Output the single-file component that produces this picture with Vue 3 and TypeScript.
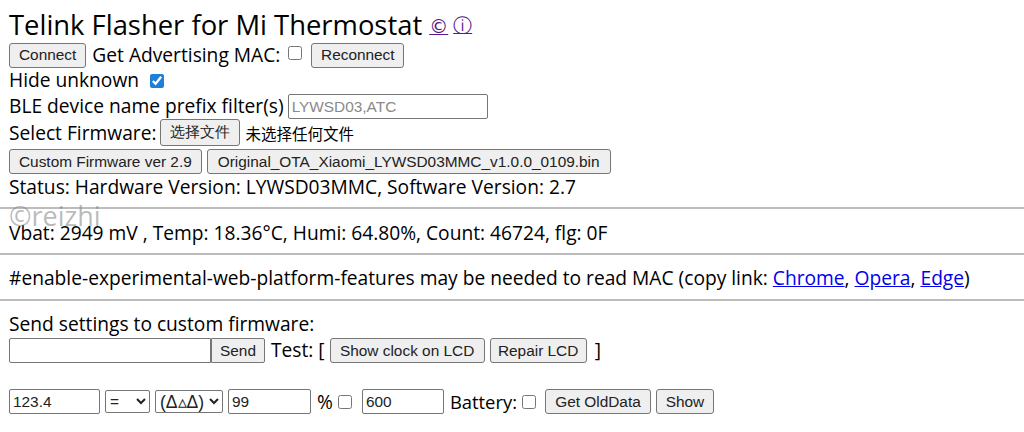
<script setup lang="ts">
const title = 'Telink Flasher for Mi Thermostat'
</script>

<template>
  <div class="page">
    <div class="row title-row">
      <h1>{{ title }}</h1>
      <a class="glyph" href="#">©</a>
      <a class="glyph" href="#">ⓘ</a>
    </div>
    <div class="row r-connect">
      <button>Connect</button>
      <span>Get Advertising MAC:</span>
      <input type="checkbox" />
      <button class="reconnect">Reconnect</button>
    </div>
    <div class="row r-hide">
      <span>Hide unknown</span>
      <input class="hide-check" type="checkbox" checked />
    </div>
    <div class="row r-filter">
      <span>BLE device name prefix filter(s)</span>
      <input class="text filter" type="text" placeholder="LYWSD03,ATC" />
    </div>
    <div class="row r-file">
      <span>Select Firmware:</span>
      <button class="pick">选择文件</button>
      <span class="nofile">未选择任何文件</span>
    </div>
    <div class="row r-fw">
      <button>Custom Firmware ver 2.9</button>
      <button class="orig">Original_OTA_Xiaomi_LYWSD03MMC_v1.0.0_0109.bin</button>
    </div>
    <div class="row line r-status">Status: Hardware Version: LYWSD03MMC, Software Version: 2.7</div>
    <hr class="hr1" />
    <div class="row line r-vbat">Vbat: 2949 mV , Temp: 18.36°C, Humi: 64.80%, Count: 46724, flg: 0F</div>
    <hr class="hr2" />
    <div class="row line r-note">
      <span>#enable-experimental-web-platform-features may be needed to read MAC (copy link:&nbsp;<a href="#">Chrome</a>, <a href="#">Opera</a>, <a href="#">Edge</a>)</span>
    </div>
    <hr class="hr3" />
    <div class="row line r-send-label">Send settings to custom firmware:</div>
    <div class="row r-send">
      <input class="text send-input" type="text" />
      <button class="send-btn">Send</button>
      <span class="test">Test: [</span>
      <button class="clock">Show clock on LCD</button>
      <button class="repair">Repair LCD</button>
      <span class="close">]</span>
    </div>
    <div class="row r-values">
      <input class="text v-temp" type="text" value="123.4" />
      <select class="s-eq"><option>=</option></select>
      <select class="s-face"><option>(Δ▵Δ)</option></select>
      <input class="text v-hum" type="text" value="99" />
      <span class="pct">%</span>
      <input class="cb-pct" type="checkbox" />
      <input class="text v-time" type="text" value="600" />
      <span class="batt">Battery:</span>
      <input class="cb-batt" type="checkbox" />
      <button class="old">Get OldData</button>
      <button class="show">Show</button>
    </div>
    <div class="mark">©reizhi</div>
  </div>
</template>

<style>
body {
  margin: 0;
  background: #fff;
}
</style>

<style scoped>
.page {
  position: relative;
  width: 1024px;
  height: 432px;
  overflow: hidden;
  box-sizing: border-box;
  padding: 0 0 0 9px;
  font-family: "Open Sans", "Noto Sans", sans-serif;
  font-size: 19.2px;
  color: #000;
}
.row {
  display: flex;
  align-items: center;
  white-space: nowrap;
}
.line {
  box-sizing: border-box;
  padding-bottom: 2px;
}
h1 {
  margin: 2px 0 0;
  font-size: 27.4px;
  font-weight: 400;
  line-height: 36px;
}
.title-row { height: 36px; margin-top: 6px; }
.glyph {
  color: #551a8b;
  font-family: "DejaVu Sans", sans-serif;
  font-size: 19px;
  margin-left: 5px;
  padding-top: 4px;
}
.title-row h1 + .glyph { margin-left: 7px; }
button {
  height: 25px;
  box-sizing: border-box;
  padding: 0 9px;
  background: #efefef;
  border: 1px solid #767676;
  border-radius: 3px;
  font-family: "Liberation Sans", Arial, sans-serif;
  font-size: 15.4px;
  color: #222;
}
input[type="checkbox"] {
  width: 14px;
  height: 14px;
  margin: 0;
  accent-color: #1f7fd8;
}
.text {
  box-sizing: border-box;
  height: 25px;
  padding: 1px 3px;
  background: #fff;
  border: 1px solid #767676;
  border-radius: 2px;
  font-family: "Liberation Sans", Arial, sans-serif;
  font-size: 15.4px;
  color: #222;
}
.text::placeholder { color: #8a8a8a; }
select {
  box-sizing: border-box;
  height: 23px;
  background: #fff;
  border: 1px solid #767676;
  border-radius: 2px;
  font-family: "Liberation Sans", Arial, sans-serif;
  font-size: 15.4px;
  color: #222;
}
.r-connect { height: 26px; gap: 6px; }
.r-connect span { margin-bottom: 2px; }
.r-connect span + input { margin-left: 2px; margin-bottom: 5px; }
.reconnect { margin-left: 3px; width: 93px; padding: 0; }
.r-hide { height: 26px; gap: 11px; }
.r-hide span { margin-bottom: 3px; }
.hide-check { margin-bottom: 2px; }
.r-filter { height: 25px; gap: 4px; }
.r-filter span { margin-bottom: 2px; }
.filter { width: 200px; }
.r-file { height: 27px; gap: 4px; }
.pick { height: 27px; width: 80px; padding: 0; }
.nofile {
  margin-left: 1px;
  font-family: "Noto Sans CJK SC", sans-serif;
  font-size: 15.5px;
}
.r-fw { height: 25px; gap: 5px; margin-top: 3px; }
.orig { padding: 0 10px; }
.r-status { height: 26px; }
hr {
  margin: 0;
  margin-left: -9px;
  width: 1024px;
  height: 2px;
  border: 0;
  background: #bcbcbc;
}
.hr1 { margin-top: 7px; }
.r-vbat { height: 26px; margin-top: 11px; }
.hr2 { margin-top: 7px; }
.r-note { height: 26px; margin-top: 10px; }
.hr3 { margin-top: 8px; }
.r-send-label { height: 26px; margin-top: 10px; }
.r-send { height: 25px; gap: 5px; margin-top: 1px; }
.send-input { width: 202px; border-radius: 2px 0 0 2px; }
.send-btn { margin-left: -5px; width: 54px; padding: 0; border-radius: 0 2px 2px 0; }
.test { margin-left: 1px; margin-bottom: 3px; }
.clock { width: 155px; padding: 0; }
.repair { width: 97px; padding: 0; }
.close { margin-left: 3px; margin-bottom: 3px; }
.r-values { height: 25px; margin-top: 26px; gap: 5px; }
.v-temp { width: 91px; }
.s-eq { width: 45px; }
.s-face { width: 68px; font-size: 17.5px; }
.v-hum { width: 83px; }
.pct { margin-left: 1px; }
.v-time { width: 82px; margin-left: 5px; }
.batt { margin-left: 1px; font-size: 18.4px; }
.old { margin-left: 4px; width: 106px; padding: 0; }
.show { width: 58px; padding: 0; }
.mark {
  position: absolute;
  left: 9px;
  top: 197px;
  font-family: "Open Sans", sans-serif;
  font-size: 27px;
  color: rgba(120, 120, 120, 0.5);
}
</style>
